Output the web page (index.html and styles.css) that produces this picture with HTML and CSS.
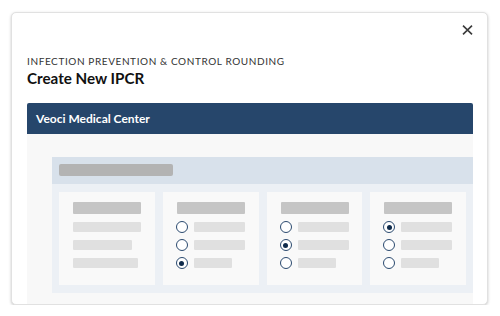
FILE: index.html
```html
<!DOCTYPE html>
<html>
<head>
<meta charset="utf-8">
<link rel="stylesheet" href="styles.css">
</head>
<body>
<div class="modal">
  <div class="close-row">
    <svg class="close" width="11" height="10" viewBox="0 0 11 10"><path d="M1 0.6 L10 9.4 M10 0.6 L1 9.4" stroke="#3c3c3c" stroke-width="1.6" fill="none"/></svg>
  </div>
  <div class="eyebrow">INFECTION PREVENTION &amp; CONTROL ROUNDING</div>
  <div class="title">Create New IPCR</div>
  <div class="preview">
    <div class="bar">Veoci Medical Center</div>
    <div class="canvas">
      <div class="panel">
        <div class="panel-head"><div class="ph-bar"></div></div>
        <div class="panel-body">
          <div class="card">
            <div class="c-head"></div>
            <div class="row"><div class="line w68"></div></div>
            <div class="row"><div class="line w59"></div></div>
            <div class="row"><div class="line w65"></div></div>
          </div>
          <div class="card">
            <div class="c-head"></div>
            <div class="row"><span class="radio"></span><div class="line w51"></div></div>
            <div class="row"><span class="radio"></span><div class="line w51"></div></div>
            <div class="row"><span class="radio on"></span><div class="line w38"></div></div>
          </div>
          <div class="card">
            <div class="c-head"></div>
            <div class="row"><span class="radio"></span><div class="line w51"></div></div>
            <div class="row"><span class="radio on"></span><div class="line w51"></div></div>
            <div class="row"><span class="radio"></span><div class="line w38"></div></div>
          </div>
          <div class="card">
            <div class="c-head"></div>
            <div class="row"><span class="radio on"></span><div class="line w51"></div></div>
            <div class="row"><span class="radio"></span><div class="line w51"></div></div>
            <div class="row"><span class="radio"></span><div class="line w38"></div></div>
          </div>
        </div>
      </div>
    </div>
  </div>
</div>
</body>
</html>
```
FILE: styles.css
```css
html, body {
  margin: 0;
  background: #ffffff;
}
body {
  padding: 12px 0 0 11px;
  font-family: Lato, "Liberation Sans", sans-serif;
}
.modal {
  box-sizing: border-box;
  width: 477px;
  height: 293px;
  border: 1px solid #e1e1e1;
  border-radius: 5px;
  box-shadow: 0 1px 3px rgba(0,0,0,0.22);
  background: #fff;
  padding: 0 14px 0 15px;
  display: flex;
  flex-direction: column;
  overflow: hidden;
}
.close-row {
  display: flex;
  justify-content: flex-end;
  padding-top: 12px;
  height: 10px;
  margin-bottom: 20px;
}
.close { display: block; }
.eyebrow {
  font-size: 10px;
  line-height: 12px;
  letter-spacing: 0.6px;
  color: #333;
}
.title {
  margin-top: 2px;
  font-size: 15.2px;
  line-height: 19px;
  font-weight: 700;
  color: #111;
}
.preview {
  margin-top: 15px;
  flex: 1;
  display: flex;
  flex-direction: column;
  min-height: 0;
}
.bar {
  height: 31px;
  flex: none;
  background: #26466b;
  color: #fff;
  font-size: 12px;
  font-weight: 700;
  line-height: 31px;
  padding-left: 9px;
  border-radius: 2px 2px 0 0;
}
.canvas {
  flex: 1;
  background: #f8f8f8;
  padding: 23px 0 0 25px;
}
.panel {
  background: #ecf0f5;
}
.panel-head {
  height: 27px;
  box-sizing: border-box;
  padding: 7px;
  background: #d8e1eb;
}
.ph-bar {
  width: 114px;
  height: 12px;
  background: #b3b3b3;
  border-radius: 2px;
}
.panel-body {
  display: grid;
  grid-template-columns: repeat(4, 1fr);
  gap: 8px;
  padding: 8px 7px;
}
.card {
  height: 93px;
  box-sizing: border-box;
  background: #f9f9f9;
  padding: 10px 13px 0 13px;
  display: flex;
  flex-direction: column;
  gap: 6px;
}
.c-head {
  width: 68px;
  height: 12px;
  margin-left: 1px;
  margin-bottom: 1px;
  background: #c5c5c5;
  border-radius: 1px;
}
.row {
  height: 12px;
  display: flex;
  align-items: center;
  gap: 6px;
}
.card:first-child .row { padding-left: 1px; }
.line {
  height: 10px;
  background: #e0e0e0;
  border-radius: 1px;
}
.w68 { width: 68px; }
.w59 { width: 59px; }
.w65 { width: 65px; }
.w51 { width: 51px; }
.w38 { width: 38px; }
.radio {
  box-sizing: border-box;
  width: 12px;
  height: 12px;
  border: 1.3px solid #2b4a6f;
  border-radius: 50%;
  background: #fff;
  flex: none;
  display: flex;
  align-items: center;
  justify-content: center;
}
.radio.on::after {
  content: "";
  width: 5px;
  height: 5px;
  border-radius: 50%;
  background: #0f2b4b;
}
```
